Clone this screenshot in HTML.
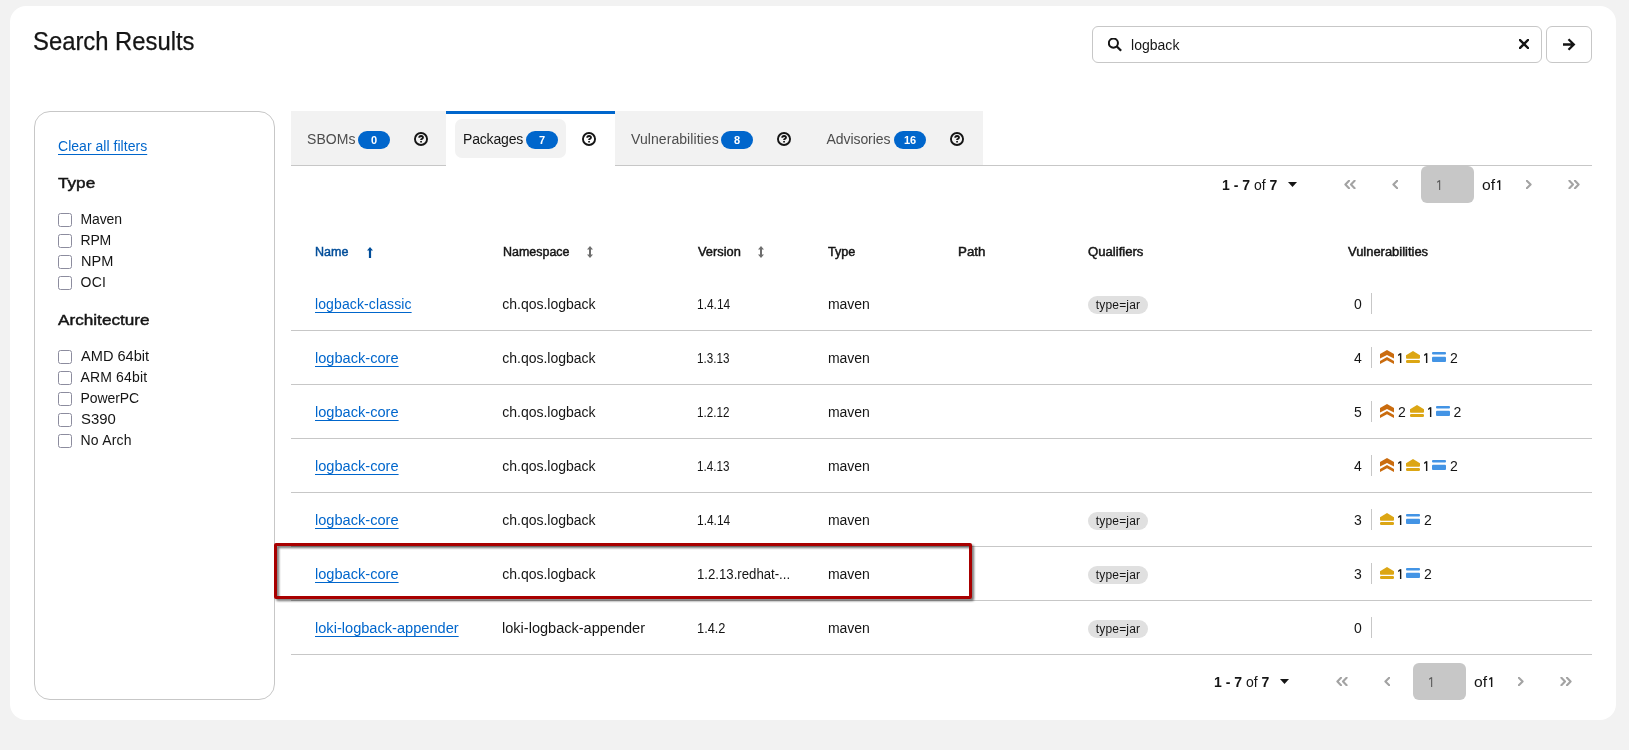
<!DOCTYPE html>
<html><head><meta charset="utf-8"><title>Search Results</title>
<style>
html,body{margin:0;padding:0;}
body{width:1629px;height:750px;background:#f2f2f2;position:relative;overflow:hidden;font-family:"Liberation Sans",sans-serif;}
.a{position:absolute;}
.t{position:absolute;line-height:1;white-space:nowrap;}
.badge{position:absolute;width:32px;height:18px;border-radius:9px;background:#0066cc;color:#fff;font-size:11px;font-weight:bold;line-height:19px;text-align:center;}
.label{position:absolute;width:60px;height:18px;border-radius:9px;background:#e0e0e0;color:#151515;font-size:12px;line-height:18px;text-align:center;letter-spacing:0.2px;}
</style></head><body><div id="root" style="position:absolute;left:0;top:0;width:1629px;height:750px;will-change:transform;">
<div class="a" style="left:10px;top:6px;width:1606px;height:714px;background:#fff;border-radius:16px;"></div>
<div class="t" style="left:32.8px;top:29px;font-size:25px;color:#151515;-webkit-text-stroke:0.25px #151515;transform:scaleX(0.9528);transform-origin:0 0;">Search Results</div>
<div class="a" style="left:1092px;top:26px;width:450px;height:37px;box-sizing:border-box;border:1px solid #c7c7c7;border-radius:6px;"></div>
<svg class="a" style="left:1108px;top:38px;" width="14" height="14" viewBox="0 0 14 14"><circle cx="5.4" cy="5.1" r="4.55" fill="none" stroke="#151515" stroke-width="2"/><line x1="8.6" y1="8.3" x2="13.1" y2="12.8" stroke="#151515" stroke-width="2.3" stroke-linecap="butt"/></svg>
<div class="t" style="left:1131px;top:38px;font-size:14px;color:#151515;letter-spacing:0.021px;">logback</div>
<svg class="a" style="left:1519px;top:39px;" width="10" height="10" viewBox="0 0 10 10"><path d="M1 1L9 9M9 1L1 9" stroke="#151515" stroke-width="2.4" stroke-linecap="square"/></svg>
<div class="a" style="left:1546px;top:26px;width:46px;height:37px;box-sizing:border-box;border:1px solid #c7c7c7;border-radius:6px;"></div>
<svg class="a" style="left:1562px;top:38px;" width="14" height="13" viewBox="0 0 14 13"><path d="M1 6.5H11.5M6.5 1.2L11.8 6.5L6.5 11.8" fill="none" stroke="#151515" stroke-width="2.3"/></svg>
<div class="a" style="left:34px;top:111px;width:241px;height:589px;box-sizing:border-box;border:1px solid #c7c7c7;border-radius:16px;"></div>
<div class="t" style="left:58px;top:139px;font-size:14px;color:#0066cc;text-decoration:underline;text-underline-offset:3px;letter-spacing:0.031px;">Clear all filters</div>
<div class="t" style="left:58px;top:175px;font-size:15px;color:#151515;-webkit-text-stroke:0.45px #151515;transform:scaleX(1.1429);transform-origin:0 0;">Type</div>
<div class="a" style="left:58px;top:213px;width:14px;height:14px;box-sizing:border-box;border:1px solid #8c8c9e;border-radius:2.5px;"></div>
<div class="t" style="left:80.5px;top:212px;font-size:14px;color:#151515;letter-spacing:-0.125px;">Maven</div>
<div class="a" style="left:58px;top:234px;width:14px;height:14px;box-sizing:border-box;border:1px solid #8c8c9e;border-radius:2.5px;"></div>
<div class="t" style="left:80.5px;top:233px;font-size:14px;color:#151515;letter-spacing:-0.188px;">RPM</div>
<div class="a" style="left:58px;top:255px;width:14px;height:14px;box-sizing:border-box;border:1px solid #8c8c9e;border-radius:2.5px;"></div>
<div class="t" style="left:80.5px;top:254px;font-size:14px;color:#151515;transform:scaleX(1.0390);transform-origin:0 0;">NPM</div>
<div class="a" style="left:58px;top:276px;width:14px;height:14px;box-sizing:border-box;border:1px solid #8c8c9e;border-radius:2.5px;"></div>
<div class="t" style="left:80.5px;top:275px;font-size:14px;color:#151515;letter-spacing:0.250px;">OCI</div>
<div class="t" style="left:58px;top:312px;font-size:15px;color:#151515;-webkit-text-stroke:0.45px #151515;transform:scaleX(1.1447);transform-origin:0 0;">Architecture</div>
<div class="a" style="left:58px;top:350px;width:14px;height:14px;box-sizing:border-box;border:1px solid #8c8c9e;border-radius:2.5px;"></div>
<div class="t" style="left:80.5px;top:349px;font-size:14px;color:#151515;transform:scaleX(1.0421);transform-origin:0 0;">AMD 64bit</div>
<div class="a" style="left:58px;top:371px;width:14px;height:14px;box-sizing:border-box;border:1px solid #8c8c9e;border-radius:2.5px;"></div>
<div class="t" style="left:80.5px;top:370px;font-size:14px;color:#151515;letter-spacing:0.156px;">ARM 64bit</div>
<div class="a" style="left:58px;top:392px;width:14px;height:14px;box-sizing:border-box;border:1px solid #8c8c9e;border-radius:2.5px;"></div>
<div class="t" style="left:80.5px;top:391px;font-size:14px;color:#151515;letter-spacing:-0.083px;">PowerPC</div>
<div class="a" style="left:58px;top:413px;width:14px;height:14px;box-sizing:border-box;border:1px solid #8c8c9e;border-radius:2.5px;"></div>
<div class="t" style="left:80.5px;top:412px;font-size:14px;color:#151515;transform:scaleX(1.0635);transform-origin:0 0;">S390</div>
<div class="a" style="left:58px;top:434px;width:14px;height:14px;box-sizing:border-box;border:1px solid #8c8c9e;border-radius:2.5px;"></div>
<div class="t" style="left:80.5px;top:433px;font-size:14px;color:#151515;letter-spacing:0.208px;">No Arch</div>
<div class="a" style="left:291px;top:165px;width:155px;height:1px;background:#c7c7c7;"></div>
<div class="a" style="left:615px;top:165px;width:977px;height:1px;background:#c7c7c7;"></div>
<div class="a" style="left:291px;top:111px;width:155px;height:54px;background:#f2f2f2;"></div>
<div class="a" style="left:615px;top:111px;width:368px;height:54px;background:#f2f2f2;"></div>
<div class="a" style="left:446px;top:111px;width:169px;height:3px;background:#0066cc;"></div>
<div class="a" style="left:455px;top:119px;width:111px;height:39px;background:#f2f2f2;border-radius:7px;"></div>
<div class="t" style="left:307px;top:132px;font-size:14px;color:#4d4d4d;letter-spacing:0.069px;">SBOMs</div>
<div class="badge" style="left:358px;top:131px;">0</div>
<svg class="a" style="left:414px;top:132px;" width="14" height="14" viewBox="0 0 14 14"><circle cx="7" cy="7" r="6.05" fill="none" stroke="#151515" stroke-width="1.9"/><path d="M5.2 5.8C5.2 4.6 6 4 7.1 4C8.2 4 9 4.7 9 5.6C9 6.7 7.9 6.9 7.1 7.6V8.1" fill="none" stroke="#151515" stroke-width="1.8"/><rect x="6.1" y="9" width="1.9" height="1.6" rx="0.5" fill="#151515"/></svg>
<div class="t" style="left:463px;top:132px;font-size:14px;color:#151515;letter-spacing:-0.168px;">Packages</div>
<div class="badge" style="left:526px;top:131px;">7</div>
<svg class="a" style="left:582px;top:132px;" width="14" height="14" viewBox="0 0 14 14"><circle cx="7" cy="7" r="6.05" fill="none" stroke="#151515" stroke-width="1.9"/><path d="M5.2 5.8C5.2 4.6 6 4 7.1 4C8.2 4 9 4.7 9 5.6C9 6.7 7.9 6.9 7.1 7.6V8.1" fill="none" stroke="#151515" stroke-width="1.8"/><rect x="6.1" y="9" width="1.9" height="1.6" rx="0.5" fill="#151515"/></svg>
<div class="t" style="left:631px;top:132px;font-size:14px;color:#4d4d4d;letter-spacing:0.071px;">Vulnerabilities</div>
<div class="badge" style="left:721px;top:131px;">8</div>
<svg class="a" style="left:777px;top:132px;" width="14" height="14" viewBox="0 0 14 14"><circle cx="7" cy="7" r="6.05" fill="none" stroke="#151515" stroke-width="1.9"/><path d="M5.2 5.8C5.2 4.6 6 4 7.1 4C8.2 4 9 4.7 9 5.6C9 6.7 7.9 6.9 7.1 7.6V8.1" fill="none" stroke="#151515" stroke-width="1.8"/><rect x="6.1" y="9" width="1.9" height="1.6" rx="0.5" fill="#151515"/></svg>
<div class="t" style="left:826.5px;top:132px;font-size:14px;color:#4d4d4d;letter-spacing:-0.069px;">Advisories</div>
<div class="badge" style="left:894px;top:131px;">16</div>
<svg class="a" style="left:949.5px;top:132px;" width="14" height="14" viewBox="0 0 14 14"><circle cx="7" cy="7" r="6.05" fill="none" stroke="#151515" stroke-width="1.9"/><path d="M5.2 5.8C5.2 4.6 6 4 7.1 4C8.2 4 9 4.7 9 5.6C9 6.7 7.9 6.9 7.1 7.6V8.1" fill="none" stroke="#151515" stroke-width="1.8"/><rect x="6.1" y="9" width="1.9" height="1.6" rx="0.5" fill="#151515"/></svg>
<div class="t" style="left:1222px;top:178px;font-size:14px;color:#151515;transform:scaleX(1.0);"><b>1 - 7</b> of <b>7</b></div>
<svg class="a" style="left:1288px;top:182px;" width="9" height="5" viewBox="0 0 9 5"><path d="M0 0H9L4.5 5Z" fill="#151515"/></svg>
<svg class="a" style="left:1344px;top:180px;" width="12" height="9" viewBox="0 0 12 9"><path d="M5 0.8L1.4 4.5L5 8.2M10.6 0.8L7 4.5L10.6 8.2" fill="none" stroke="#a3a3a3" stroke-width="2.1" stroke-linecap="round" stroke-linejoin="round"/></svg>
<svg class="a" style="left:1392px;top:180px;" width="6" height="9" viewBox="0 0 6 9"><path d="M5.2 0.8L1.4 4.5L5.2 8.2" fill="none" stroke="#a3a3a3" stroke-width="2.1" stroke-linecap="round" stroke-linejoin="round"/></svg>
<div class="a" style="left:1421px;top:166px;width:53px;height:37px;background:#c7c7c7;border-radius:6px;"></div>
<svg class="a" style="left:1436.5px;top:180px;" width="4" height="10" viewBox="0 0 4 10"><path d="M2.65 0.2V10M0.2 2.4L2.65 0.5" fill="none" stroke="#5a5a5a" stroke-width="1.1"/></svg>
<div class="t" style="left:1481.5px;top:178px;font-size:14px;color:#151515;transform:scaleX(1.1182);transform-origin:0 0;">of</div>
<svg class="a" style="left:1497.3px;top:180px;" width="4" height="10" viewBox="0 0 4 10"><path d="M2.65 0.2V10M0.2 2.4L2.65 0.5" fill="none" stroke="#151515" stroke-width="1.4"/></svg>
<svg class="a" style="left:1526px;top:180px;" width="6" height="9" viewBox="0 0 6 9"><path d="M0.8 0.8L4.6 4.5L0.8 8.2" fill="none" stroke="#a3a3a3" stroke-width="2.1" stroke-linecap="round" stroke-linejoin="round"/></svg>
<svg class="a" style="left:1568px;top:180px;" width="12" height="9" viewBox="0 0 12 9"><path d="M1.4 0.8L5 4.5L1.4 8.2M7 0.8L10.6 4.5L7 8.2" fill="none" stroke="#a3a3a3" stroke-width="2.1" stroke-linecap="round" stroke-linejoin="round"/></svg>
<div class="t" style="left:1214px;top:675px;font-size:14px;color:#151515;transform:scaleX(1.0);"><b>1 - 7</b> of <b>7</b></div>
<svg class="a" style="left:1280px;top:679px;" width="9" height="5" viewBox="0 0 9 5"><path d="M0 0H9L4.5 5Z" fill="#151515"/></svg>
<svg class="a" style="left:1336px;top:677px;" width="12" height="9" viewBox="0 0 12 9"><path d="M5 0.8L1.4 4.5L5 8.2M10.6 0.8L7 4.5L10.6 8.2" fill="none" stroke="#a3a3a3" stroke-width="2.1" stroke-linecap="round" stroke-linejoin="round"/></svg>
<svg class="a" style="left:1384px;top:677px;" width="6" height="9" viewBox="0 0 6 9"><path d="M5.2 0.8L1.4 4.5L5.2 8.2" fill="none" stroke="#a3a3a3" stroke-width="2.1" stroke-linecap="round" stroke-linejoin="round"/></svg>
<div class="a" style="left:1413px;top:663px;width:53px;height:37px;background:#c7c7c7;border-radius:6px;"></div>
<svg class="a" style="left:1428.5px;top:677px;" width="4" height="10" viewBox="0 0 4 10"><path d="M2.65 0.2V10M0.2 2.4L2.65 0.5" fill="none" stroke="#5a5a5a" stroke-width="1.1"/></svg>
<div class="t" style="left:1473.5px;top:675px;font-size:14px;color:#151515;transform:scaleX(1.1182);transform-origin:0 0;">of</div>
<svg class="a" style="left:1489.3px;top:677px;" width="4" height="10" viewBox="0 0 4 10"><path d="M2.65 0.2V10M0.2 2.4L2.65 0.5" fill="none" stroke="#151515" stroke-width="1.4"/></svg>
<svg class="a" style="left:1518px;top:677px;" width="6" height="9" viewBox="0 0 6 9"><path d="M0.8 0.8L4.6 4.5L0.8 8.2" fill="none" stroke="#a3a3a3" stroke-width="2.1" stroke-linecap="round" stroke-linejoin="round"/></svg>
<svg class="a" style="left:1560px;top:677px;" width="12" height="9" viewBox="0 0 12 9"><path d="M1.4 0.8L5 4.5L1.4 8.2M7 0.8L10.6 4.5L7 8.2" fill="none" stroke="#a3a3a3" stroke-width="2.1" stroke-linecap="round" stroke-linejoin="round"/></svg>
<div class="t" style="left:315px;top:246px;font-size:12px;color:#004d99;-webkit-text-stroke:0.45px #004d99;transform:scaleX(1.0426);transform-origin:0 0;">Name</div>
<svg class="a" style="left:367px;top:246.5px;" width="6" height="11" viewBox="0 0 6 11"><path d="M3 0L6 3.6H4.1V11H1.9V3.6H0Z" fill="#004d99"/></svg>
<div class="t" style="left:502.5px;top:246px;font-size:12px;color:#151515;-webkit-text-stroke:0.45px #151515;transform:scaleX(1.0384);transform-origin:0 0;">Namespace</div>
<div class="t" style="left:697.5px;top:246px;font-size:12px;color:#151515;-webkit-text-stroke:0.45px #151515;transform:scaleX(1.0684);transform-origin:0 0;">Version</div>
<div class="t" style="left:828.4px;top:246px;font-size:12px;color:#151515;-webkit-text-stroke:0.45px #151515;transform:scaleX(1.0495);transform-origin:0 0;">Type</div>
<div class="t" style="left:958.1px;top:246px;font-size:12px;color:#151515;-webkit-text-stroke:0.45px #151515;transform:scaleX(1.1104);transform-origin:0 0;">Path</div>
<div class="t" style="left:1087.8px;top:246px;font-size:12px;color:#151515;-webkit-text-stroke:0.45px #151515;transform:scaleX(1.0935);transform-origin:0 0;">Qualifiers</div>
<div class="t" style="left:1348px;top:246px;font-size:12px;color:#151515;-webkit-text-stroke:0.45px #151515;transform:scaleX(1.0780);transform-origin:0 0;">Vulnerabilities</div>
<svg class="a" style="left:587px;top:246px;" width="6" height="12" viewBox="0 0 6 12"><path d="M3 0L6 3.4H4V8.6H6L3 12L0 8.6H2V3.4H0Z" fill="#6e6e6e"/></svg>
<svg class="a" style="left:758px;top:246px;" width="6" height="12" viewBox="0 0 6 12"><path d="M3 0L6 3.4H4V8.6H6L3 12L0 8.6H2V3.4H0Z" fill="#6e6e6e"/></svg>
<div class="t" style="left:315px;top:297px;font-size:14px;color:#0066cc;text-decoration:underline;text-underline-offset:3px;letter-spacing:0.113px;">logback-classic</div>
<div class="t" style="left:502.3px;top:297px;font-size:14px;color:#151515;letter-spacing:-0.012px;">ch.qos.logback</div>
<div class="t" style="left:697px;top:297px;font-size:14px;color:#151515;transform:scaleX(0.8533);transform-origin:0 0;">1.4.14</div>
<div class="t" style="left:828px;top:297px;font-size:14px;color:#151515;letter-spacing:-0.062px;">maven</div>
<div class="label" style="left:1088px;top:296px;">type=jar</div>
<div class="t" style="left:1354px;top:297px;font-size:14px;color:#151515;">0</div>
<div class="a" style="left:1371px;top:293px;width:1px;height:21px;background:#c7c7c7;"></div>
<div class="a" style="left:291px;top:330px;width:1301px;height:1px;background:#c7c7c7;"></div>
<div class="t" style="left:315px;top:351px;font-size:14px;color:#0066cc;text-decoration:underline;text-underline-offset:3px;transform:scaleX(1.0429);transform-origin:0 0;">logback-core</div>
<div class="t" style="left:502.3px;top:351px;font-size:14px;color:#151515;letter-spacing:-0.012px;">ch.qos.logback</div>
<div class="t" style="left:697px;top:351px;font-size:14px;color:#151515;transform:scaleX(0.8322);transform-origin:0 0;">1.3.13</div>
<div class="t" style="left:828px;top:351px;font-size:14px;color:#151515;letter-spacing:-0.062px;">maven</div>
<div class="t" style="left:1354px;top:351px;font-size:14px;color:#151515;">4</div>
<div class="a" style="left:1371px;top:347px;width:1px;height:21px;background:#c7c7c7;"></div>
<svg class="a" style="left:1380px;top:350px;" width="14" height="14" viewBox="0 0 14 14"><g fill="#ca6c0f"><path d="M7 0L14 4.1V8.6L7 5.1L0 8.6V4.1Z M7 7.1L14 11V14L7 10.2L0 14V11Z"/></g></svg>
<svg class="a" style="left:1398px;top:353px;" width="4" height="10" viewBox="0 0 4 10"><path d="M2.65 0.2V10M0.2 2.4L2.65 0.5" fill="none" stroke="#151515" stroke-width="1.4"/></svg>
<svg class="a" style="left:1406px;top:351px;" width="14" height="12" viewBox="0 0 14 12"><g fill="#dca614"><path d="M7 0L14 4.3V6.8Q14 7.7 13.1 7.7H0.9Q0 7.7 0 6.8V4.3Z"/><rect x="0" y="9.1" width="14" height="2.9" rx="1.2"/></g></svg>
<svg class="a" style="left:1424px;top:353px;" width="4" height="10" viewBox="0 0 4 10"><path d="M2.65 0.2V10M0.2 2.4L2.65 0.5" fill="none" stroke="#151515" stroke-width="1.4"/></svg>
<svg class="a" style="left:1432px;top:351.8px;" width="14" height="10" viewBox="0 0 14 10"><g fill="#4394e5"><rect x="0" y="0" width="14" height="2.4" rx="1"/><rect x="0" y="4.8" width="14" height="5.2" rx="1"/></g></svg>
<div class="t" style="left:1450px;top:351px;font-size:14px;color:#151515;">2</div>
<div class="a" style="left:291px;top:384px;width:1301px;height:1px;background:#c7c7c7;"></div>
<div class="t" style="left:315px;top:405px;font-size:14px;color:#0066cc;text-decoration:underline;text-underline-offset:3px;transform:scaleX(1.0429);transform-origin:0 0;">logback-core</div>
<div class="t" style="left:502.3px;top:405px;font-size:14px;color:#151515;letter-spacing:-0.012px;">ch.qos.logback</div>
<div class="t" style="left:697px;top:405px;font-size:14px;color:#151515;transform:scaleX(0.8322);transform-origin:0 0;">1.2.12</div>
<div class="t" style="left:828px;top:405px;font-size:14px;color:#151515;letter-spacing:-0.062px;">maven</div>
<div class="t" style="left:1354px;top:405px;font-size:14px;color:#151515;">5</div>
<div class="a" style="left:1371px;top:401px;width:1px;height:21px;background:#c7c7c7;"></div>
<svg class="a" style="left:1380px;top:404px;" width="14" height="14" viewBox="0 0 14 14"><g fill="#ca6c0f"><path d="M7 0L14 4.1V8.6L7 5.1L0 8.6V4.1Z M7 7.1L14 11V14L7 10.2L0 14V11Z"/></g></svg>
<div class="t" style="left:1398px;top:405px;font-size:14px;color:#151515;">2</div>
<svg class="a" style="left:1409.5px;top:405px;" width="14" height="12" viewBox="0 0 14 12"><g fill="#dca614"><path d="M7 0L14 4.3V6.8Q14 7.7 13.1 7.7H0.9Q0 7.7 0 6.8V4.3Z"/><rect x="0" y="9.1" width="14" height="2.9" rx="1.2"/></g></svg>
<svg class="a" style="left:1427.5px;top:407px;" width="4" height="10" viewBox="0 0 4 10"><path d="M2.65 0.2V10M0.2 2.4L2.65 0.5" fill="none" stroke="#151515" stroke-width="1.4"/></svg>
<svg class="a" style="left:1435.5px;top:405.8px;" width="14" height="10" viewBox="0 0 14 10"><g fill="#4394e5"><rect x="0" y="0" width="14" height="2.4" rx="1"/><rect x="0" y="4.8" width="14" height="5.2" rx="1"/></g></svg>
<div class="t" style="left:1453.5px;top:405px;font-size:14px;color:#151515;">2</div>
<div class="a" style="left:291px;top:438px;width:1301px;height:1px;background:#c7c7c7;"></div>
<div class="t" style="left:315px;top:459px;font-size:14px;color:#0066cc;text-decoration:underline;text-underline-offset:3px;transform:scaleX(1.0429);transform-origin:0 0;">logback-core</div>
<div class="t" style="left:502.3px;top:459px;font-size:14px;color:#151515;letter-spacing:-0.012px;">ch.qos.logback</div>
<div class="t" style="left:697px;top:459px;font-size:14px;color:#151515;transform:scaleX(0.8322);transform-origin:0 0;">1.4.13</div>
<div class="t" style="left:828px;top:459px;font-size:14px;color:#151515;letter-spacing:-0.062px;">maven</div>
<div class="t" style="left:1354px;top:459px;font-size:14px;color:#151515;">4</div>
<div class="a" style="left:1371px;top:455px;width:1px;height:21px;background:#c7c7c7;"></div>
<svg class="a" style="left:1380px;top:458px;" width="14" height="14" viewBox="0 0 14 14"><g fill="#ca6c0f"><path d="M7 0L14 4.1V8.6L7 5.1L0 8.6V4.1Z M7 7.1L14 11V14L7 10.2L0 14V11Z"/></g></svg>
<svg class="a" style="left:1398px;top:461px;" width="4" height="10" viewBox="0 0 4 10"><path d="M2.65 0.2V10M0.2 2.4L2.65 0.5" fill="none" stroke="#151515" stroke-width="1.4"/></svg>
<svg class="a" style="left:1406px;top:459px;" width="14" height="12" viewBox="0 0 14 12"><g fill="#dca614"><path d="M7 0L14 4.3V6.8Q14 7.7 13.1 7.7H0.9Q0 7.7 0 6.8V4.3Z"/><rect x="0" y="9.1" width="14" height="2.9" rx="1.2"/></g></svg>
<svg class="a" style="left:1424px;top:461px;" width="4" height="10" viewBox="0 0 4 10"><path d="M2.65 0.2V10M0.2 2.4L2.65 0.5" fill="none" stroke="#151515" stroke-width="1.4"/></svg>
<svg class="a" style="left:1432px;top:459.8px;" width="14" height="10" viewBox="0 0 14 10"><g fill="#4394e5"><rect x="0" y="0" width="14" height="2.4" rx="1"/><rect x="0" y="4.8" width="14" height="5.2" rx="1"/></g></svg>
<div class="t" style="left:1450px;top:459px;font-size:14px;color:#151515;">2</div>
<div class="a" style="left:291px;top:492px;width:1301px;height:1px;background:#c7c7c7;"></div>
<div class="t" style="left:315px;top:513px;font-size:14px;color:#0066cc;text-decoration:underline;text-underline-offset:3px;transform:scaleX(1.0429);transform-origin:0 0;">logback-core</div>
<div class="t" style="left:502.3px;top:513px;font-size:14px;color:#151515;letter-spacing:-0.012px;">ch.qos.logback</div>
<div class="t" style="left:697px;top:513px;font-size:14px;color:#151515;transform:scaleX(0.8533);transform-origin:0 0;">1.4.14</div>
<div class="t" style="left:828px;top:513px;font-size:14px;color:#151515;letter-spacing:-0.062px;">maven</div>
<div class="label" style="left:1088px;top:512px;">type=jar</div>
<div class="t" style="left:1354px;top:513px;font-size:14px;color:#151515;">3</div>
<div class="a" style="left:1371px;top:509px;width:1px;height:21px;background:#c7c7c7;"></div>
<svg class="a" style="left:1380px;top:513px;" width="14" height="12" viewBox="0 0 14 12"><g fill="#dca614"><path d="M7 0L14 4.3V6.8Q14 7.7 13.1 7.7H0.9Q0 7.7 0 6.8V4.3Z"/><rect x="0" y="9.1" width="14" height="2.9" rx="1.2"/></g></svg>
<svg class="a" style="left:1398px;top:515px;" width="4" height="10" viewBox="0 0 4 10"><path d="M2.65 0.2V10M0.2 2.4L2.65 0.5" fill="none" stroke="#151515" stroke-width="1.4"/></svg>
<svg class="a" style="left:1406px;top:513.8px;" width="14" height="10" viewBox="0 0 14 10"><g fill="#4394e5"><rect x="0" y="0" width="14" height="2.4" rx="1"/><rect x="0" y="4.8" width="14" height="5.2" rx="1"/></g></svg>
<div class="t" style="left:1424px;top:513px;font-size:14px;color:#151515;">2</div>
<div class="a" style="left:291px;top:546px;width:1301px;height:1px;background:#c7c7c7;"></div>
<div class="t" style="left:315px;top:567px;font-size:14px;color:#0066cc;text-decoration:underline;text-underline-offset:3px;transform:scaleX(1.0429);transform-origin:0 0;">logback-core</div>
<div class="t" style="left:502.3px;top:567px;font-size:14px;color:#151515;letter-spacing:-0.012px;">ch.qos.logback</div>
<div class="t" style="left:697px;top:567px;font-size:14px;color:#151515;transform:scaleX(0.9418);transform-origin:0 0;">1.2.13.redhat-...</div>
<div class="t" style="left:828px;top:567px;font-size:14px;color:#151515;letter-spacing:-0.062px;">maven</div>
<div class="label" style="left:1088px;top:566px;">type=jar</div>
<div class="t" style="left:1354px;top:567px;font-size:14px;color:#151515;">3</div>
<div class="a" style="left:1371px;top:563px;width:1px;height:21px;background:#c7c7c7;"></div>
<svg class="a" style="left:1380px;top:567px;" width="14" height="12" viewBox="0 0 14 12"><g fill="#dca614"><path d="M7 0L14 4.3V6.8Q14 7.7 13.1 7.7H0.9Q0 7.7 0 6.8V4.3Z"/><rect x="0" y="9.1" width="14" height="2.9" rx="1.2"/></g></svg>
<svg class="a" style="left:1398px;top:569px;" width="4" height="10" viewBox="0 0 4 10"><path d="M2.65 0.2V10M0.2 2.4L2.65 0.5" fill="none" stroke="#151515" stroke-width="1.4"/></svg>
<svg class="a" style="left:1406px;top:567.8px;" width="14" height="10" viewBox="0 0 14 10"><g fill="#4394e5"><rect x="0" y="0" width="14" height="2.4" rx="1"/><rect x="0" y="4.8" width="14" height="5.2" rx="1"/></g></svg>
<div class="t" style="left:1424px;top:567px;font-size:14px;color:#151515;">2</div>
<div class="a" style="left:291px;top:600px;width:1301px;height:1px;background:#c7c7c7;"></div>
<div class="t" style="left:315px;top:621px;font-size:14px;color:#0066cc;text-decoration:underline;text-underline-offset:3px;transform:scaleX(1.0428);transform-origin:0 0;">loki-logback-appender</div>
<div class="t" style="left:502.3px;top:621px;font-size:14px;color:#151515;transform:scaleX(1.0384);transform-origin:0 0;">loki-logback-appender</div>
<div class="t" style="left:697px;top:621px;font-size:14px;color:#151515;transform:scaleX(0.9153);transform-origin:0 0;">1.4.2</div>
<div class="t" style="left:828px;top:621px;font-size:14px;color:#151515;letter-spacing:-0.062px;">maven</div>
<div class="label" style="left:1088px;top:620px;">type=jar</div>
<div class="t" style="left:1354px;top:621px;font-size:14px;color:#151515;">0</div>
<div class="a" style="left:1371px;top:617px;width:1px;height:21px;background:#c7c7c7;"></div>
<div class="a" style="left:291px;top:654px;width:1301px;height:1px;background:#c7c7c7;"></div>
<div class="a" style="left:274px;top:543px;width:698px;height:56px;box-sizing:border-box;border:3px solid #a80000;border-radius:2px;filter:drop-shadow(2px 2px 1px rgba(0,0,0,0.55));"></div>
</div></body></html>
